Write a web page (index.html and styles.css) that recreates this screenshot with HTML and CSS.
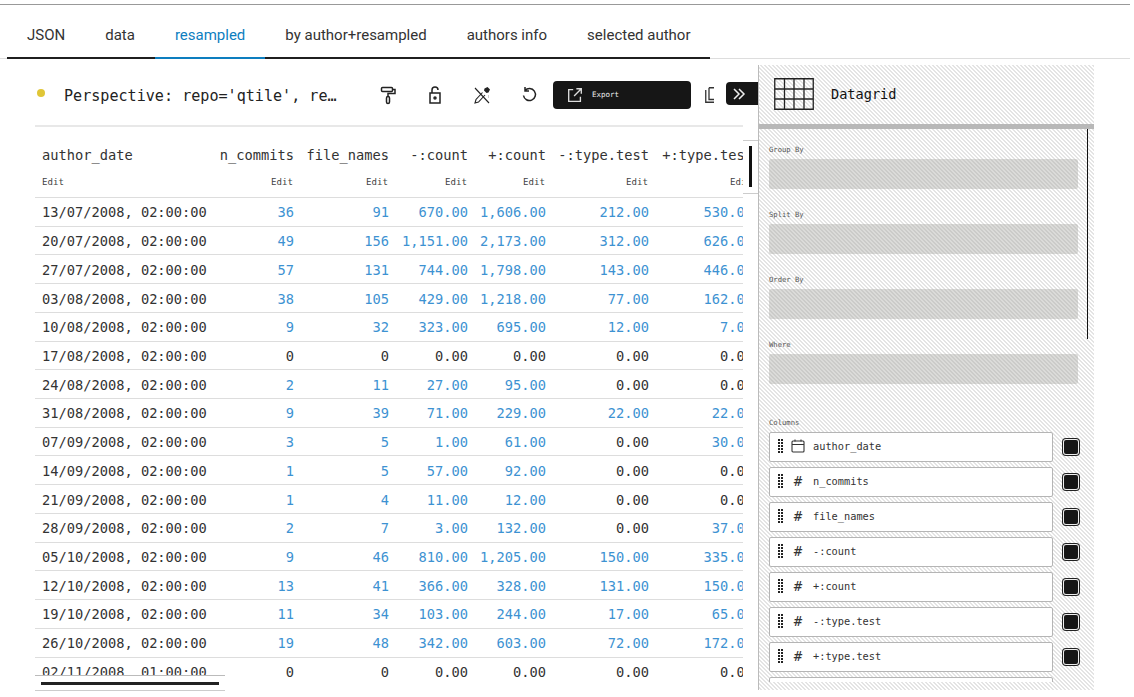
FILE: index.html
```html
<!DOCTYPE html>
<html lang="en">
<head>
    <meta charset="UTF-8">
    <meta name="viewport" content="width=device-width, initial-scale=1.0">
    <title>Perspective</title>
    <link rel="stylesheet" href="styles.css">
</head>
<body>

    <nav class="tabs">
        <a class="tab">JSON</a>
        <a class="tab">data</a>
        <a class="tab active">resampled</a>
        <a class="tab">by author+resampled</a>
        <a class="tab">authors info</a>
        <a class="tab">selected author</a>
    </nav>

    <div class="main">
        <section class="viewer">
            <div class="title-row">
                <span class="dot"></span>
                <span class="title">Perspective: repo='qtile', re…</span>
                <div class="tools">
                    <!-- paint roller -->
                    <svg class="tool" viewBox="0 0 20 20"><path d="M3.5 3.5a1 1 0 0 1 1-1h9a1 1 0 0 1 1 1v2a1 1 0 0 1-1 1h-9a1 1 0 0 1-1-1zM14.500 4.500h2.500v4h-7v3"/><rect x="8.500" y="11.500" width="3" height="7" rx="1.500"/></svg>
                    <!-- open lock -->
                    <svg class="tool" viewBox="0 0 20 20"><rect x="5" y="8" width="10" height="10"/><path d="M7 8V5a3 3 0 0 1 6 0"/><circle cx="10" cy="13" r="1"/></svg>
                    <!-- unpinned -->
                    <svg class="tool thin" viewBox="0 0 20 20"><path d="M3 3l14 15M10.500 7.500l-6.500 7-1 3.500 3.500-1 6.500-7"/><path class="fill" d="M12.500 3.500l3-1.500 2.500 2.500-1.500 3-2 .5-2.500-2.500z"/></svg>
                    <span class="tick"></span>
                    <!-- reset -->
                    <svg class="tool" viewBox="0 0 20 20"><path d="M6 5.500a6 6 0 1 1-1.500 5M6 2v4h4"/></svg>
                </div>
                <button class="export">
                    <svg viewBox="0 0 20 20"><path d="M8 4H3v13h13v-5M9 11l8-8M11.500 3H17v5.500"/></svg>
                    <span>Export</span>
                </button>
                <svg class="copy" viewBox="0 0 9 16"><path d="M4 .75H9M4 .75V12.500H9M.75 3V15.250H9"/></svg>
            </div>

            <div class="table-wrap">
                <table class="grid">
                    <thead>
                        <tr><th>author_date</th><th>n_commits</th><th>file_names</th><th>-:count</th><th>+:count</th><th>-:type.test</th><th>+:type.test</th></tr>
                        <tr class="edit-row"><td>Edit</td><td>Edit</td><td>Edit</td><td>Edit</td><td>Edit</td><td>Edit</td><td>Edit</td></tr>
                    </thead>
                    <tbody>
                        <tr><td>13/07/2008, 02:00:00</td><td>36</td><td>91</td><td>670.00</td><td>1,606.00</td><td>212.00</td><td>530.00</td></tr>
                        <tr><td>20/07/2008, 02:00:00</td><td>49</td><td>156</td><td>1,151.00</td><td>2,173.00</td><td>312.00</td><td>626.00</td></tr>
                        <tr><td>27/07/2008, 02:00:00</td><td>57</td><td>131</td><td>744.00</td><td>1,798.00</td><td>143.00</td><td>446.00</td></tr>
                        <tr><td>03/08/2008, 02:00:00</td><td>38</td><td>105</td><td>429.00</td><td>1,218.00</td><td>77.00</td><td>162.00</td></tr>
                        <tr><td>10/08/2008, 02:00:00</td><td>9</td><td>32</td><td>323.00</td><td>695.00</td><td>12.00</td><td>7.00</td></tr>
                        <tr class="zero"><td>17/08/2008, 02:00:00</td><td>0</td><td>0</td><td>0.00</td><td>0.00</td><td>0.00</td><td>0.00</td></tr>
                        <tr><td>24/08/2008, 02:00:00</td><td>2</td><td>11</td><td>27.00</td><td>95.00</td><td class="nil">0.00</td><td class="nil">0.00</td></tr>
                        <tr><td>31/08/2008, 02:00:00</td><td>9</td><td>39</td><td>71.00</td><td>229.00</td><td>22.00</td><td>22.00</td></tr>
                        <tr><td>07/09/2008, 02:00:00</td><td>3</td><td>5</td><td>1.00</td><td>61.00</td><td class="nil">0.00</td><td>30.00</td></tr>
                        <tr><td>14/09/2008, 02:00:00</td><td>1</td><td>5</td><td>57.00</td><td>92.00</td><td class="nil">0.00</td><td class="nil">0.00</td></tr>
                        <tr><td>21/09/2008, 02:00:00</td><td>1</td><td>4</td><td>11.00</td><td>12.00</td><td class="nil">0.00</td><td class="nil">0.00</td></tr>
                        <tr><td>28/09/2008, 02:00:00</td><td>2</td><td>7</td><td>3.00</td><td>132.00</td><td class="nil">0.00</td><td>37.00</td></tr>
                        <tr><td>05/10/2008, 02:00:00</td><td>9</td><td>46</td><td>810.00</td><td>1,205.00</td><td>150.00</td><td>335.00</td></tr>
                        <tr><td>12/10/2008, 02:00:00</td><td>13</td><td>41</td><td>366.00</td><td>328.00</td><td>131.00</td><td>150.00</td></tr>
                        <tr><td>19/10/2008, 02:00:00</td><td>11</td><td>34</td><td>103.00</td><td>244.00</td><td>17.00</td><td>65.00</td></tr>
                        <tr><td>26/10/2008, 02:00:00</td><td>19</td><td>48</td><td>342.00</td><td>603.00</td><td>72.00</td><td>172.00</td></tr>
                        <tr class="zero"><td>02/11/2008, 01:00:00</td><td>0</td><td>0</td><td>0.00</td><td>0.00</td><td>0.00</td><td>0.00</td></tr>
                    </tbody>
                </table>
            </div>

            <div class="hscroll"><span></span></div>
            <div class="vscroll"><span></span></div>
            <button class="collapse">
                <svg viewBox="0 0 14 14"><path d="M2 2l5 5-5 5M7 2l5 5-5 5"/></svg>
            </button>
        </section>

        <aside class="settings">
            <header class="plugin">
                <svg class="plugin-icon" viewBox="0 0 40 32"><path d="M.75.75h38.500v30.500H.75zM10.500.75v30.500M20 .75v30.500M30 .75v30.500M.75 11h38.500M.75 21h38.500"/></svg>
                <span>Datagrid</span>
            </header>
            <div class="settings-body">
                <div class="well-label">Group By</div>
                <div class="well"></div>
                <div class="well-label">Split By</div>
                <div class="well"></div>
                <div class="well-label">Order By</div>
                <div class="well"></div>
                <div class="well-label">Where</div>
                <div class="well"></div>

                <div class="well-label columns-label">Columns</div>
                <div class="columns">
                    <div class="col-row">
                        <div class="col-pill">
                            <span class="grip"></span>
                            <svg class="cal" viewBox="0 0 14 14"><rect x="1" y="2" width="12" height="11" rx="1"/><path d="M1 5.500h12M4 .5v2M10 .5v2"/></svg>
                            <span>author_date</span>
                        </div>
                        <span class="toggle"></span>
                    </div>
                    <div class="col-row">
                        <div class="col-pill"><span class="grip"></span><span class="hash">#</span><span>n_commits</span></div>
                        <span class="toggle"></span>
                    </div>
                    <div class="col-row">
                        <div class="col-pill"><span class="grip"></span><span class="hash">#</span><span>file_names</span></div>
                        <span class="toggle"></span>
                    </div>
                    <div class="col-row">
                        <div class="col-pill"><span class="grip"></span><span class="hash">#</span><span>-:count</span></div>
                        <span class="toggle"></span>
                    </div>
                    <div class="col-row">
                        <div class="col-pill"><span class="grip"></span><span class="hash">#</span><span>+:count</span></div>
                        <span class="toggle"></span>
                    </div>
                    <div class="col-row">
                        <div class="col-pill"><span class="grip"></span><span class="hash">#</span><span>-:type.test</span></div>
                        <span class="toggle"></span>
                    </div>
                    <div class="col-row">
                        <div class="col-pill"><span class="grip"></span><span class="hash">#</span><span>+:type.test</span></div>
                        <span class="toggle"></span>
                    </div>
                    <div class="col-row">
                        <div class="col-pill"></div>
                    </div>
                </div>
            </div>
        </aside>
    </div>

</body>
</html>
```

FILE: styles.css
```css
* {
    box-sizing: border-box;
}
html, body {
    height: 100%;
    overflow: hidden;
}
body {
    margin: 0;
    background: #fff;
    color: #222;
    font-family: "DejaVu Sans Mono", monospace;
}

/* tabs */
.tabs {
    display: flex;
    margin-top: 4px;
    width: 1130px;
    height: 55px;
    padding-left: 7px;
    border-top: 1px solid #999;
    box-shadow: inset 0 -1px 0 #ddd;
    font-family: Roboto, sans-serif;
    font-size: 15px;
}
.tab {
    padding: 21px 20px 0;
    height: 54px;
    border-bottom: 2px solid #1f1f1f;
    color: #333;
}
.tab:last-child {
    padding-right: 19px;
}
.tab.active {
    color: #0d7ebf;
    border-bottom-color: #0d7ebf;
}

.main {
    display: flex;
    height: 632px;
    margin-top: 6px;
}

/* left side */
.viewer {
    position: relative;
    width: 758px;
    flex: none;
    padding-left: 35px;
}
.title-row {
    display: flex;
    align-items: center;
    width: 708px;
    height: 62px;
    padding-bottom: 1px;
    padding-left: 2px;
    border-bottom: 2px solid #e8e8e8;
    overflow: hidden;
}
.dot {
    width: 8px;
    height: 8px;
    border-radius: 50%;
    background: #e0c637;
    margin-bottom: 3px;
}
.title {
    margin: 2px 0 0 19px;
    font-size: 15.100px;
    width: 314px;
    white-space: nowrap;
}
.tools {
    position: relative;
    display: flex;
    gap: 27px;
}
.tool {
    width: 20px;
    height: 20px;
    fill: none;
    stroke: #222;
    stroke-width: 1.500;
}
.tool.thin {
    stroke-width: 1.100;
}
.tool .fill {
    fill: #222;
    stroke: none;
}
.tick {
    position: absolute;
    left: 110px;
    top: 10px;
    width: 1px;
    height: 3px;
    background: #ccc;
}
.export {
    display: flex;
    align-items: center;
    gap: 8px;
    width: 138px;
    height: 28px;
    margin-left: 14px;
    padding: 0 0 0 13px;
    border: none;
    border-radius: 4px;
    background: #161616;
    color: #eee;
    font-family: "DejaVu Sans Mono", monospace;
    font-size: 7.500px;
}
.export svg {
    width: 18px;
    height: 18px;
    fill: none;
    stroke: #ddd;
    stroke-width: 1.500;
}
.copy {
    flex: none;
    width: 9px;
    height: 16px;
    margin: 0 0 0 14px;
    fill: none;
    stroke: #333;
    stroke-width: 1.300;
}

.table-wrap {
    width: 708px;
    height: 550px;
    overflow: hidden;
}
.grid {
    table-layout: fixed;
    width: 718px;
    border-collapse: collapse;
    font-size: 13.700px;
}
.grid th {
    height: 43px;
    padding: 13px 0 0;
    font-weight: normal;
    text-align: right;
    color: #333;
}
.grid td {
    height: 28.730px;
    padding: 1px 0 0;
    text-align: right;
    border-bottom: 1px solid #ddd;
    color: #3d92d2;
    white-space: nowrap;
}
.grid th:nth-child(1), .grid td:nth-child(1) {
    width: 173px;
    padding-left: 7px;
    text-align: left;
    color: #333;
}
.grid th:nth-child(2), .grid td:nth-child(2) { width: 86px; }
.grid th:nth-child(3), .grid td:nth-child(3) { width: 95px; }
.grid th:nth-child(4), .grid td:nth-child(4) { width: 79px; }
.grid th:nth-child(5), .grid td:nth-child(5) { width: 78px; }
.grid th:nth-child(6), .grid td:nth-child(6) { width: 103px; }
.grid th:nth-child(7), .grid td:nth-child(7) { width: 104px; }
.grid .edit-row td {
    height: 27.500px;
    font-size: 9.100px;
    color: #444;
    padding: 0 1px 4px 0;
}
.grid .edit-row td:first-child {
    padding-left: 7px;
}
.grid .zero td, .grid .nil {
    color: #333;
}

/* overlays */
.hscroll {
    position: absolute;
    left: 35px;
    top: 610px;
    width: 190px;
    height: 16px;
    padding: 6px 6px;
    border-top: 1px solid #bbb;
    border-bottom: 1px solid #ccc;
    background: #fff;
}
.hscroll span {
    display: block;
    height: 3px;
    background: #222;
}
.vscroll {
    position: absolute;
    left: 743px;
    top: 75px;
    width: 15px;
    height: 54px;
    padding: 5px 0 0 6px;
    border-top: 1px solid #ccc;
    border-bottom: 1px solid #ccc;
}
.vscroll span {
    display: block;
    width: 3px;
    height: 41px;
    background: #111;
}
.collapse {
    position: absolute;
    left: 726px;
    top: 17px;
    width: 32px;
    height: 23px;
    padding: 0 0 0 6px;
    border: none;
    border-radius: 4px 0 0 4px;
    background: #161616;
    display: flex;
    align-items: center;
}
.collapse svg {
    width: 14px;
    height: 14px;
    fill: none;
    stroke: #eee;
    stroke-width: 1.500;
}

/* right side */
.settings {
    width: 336px;
    height: 625px;
    flex: none;
    border-left: 1px solid #bbb;
    background: linear-gradient(45deg, #e4e4e4 25%, #fff 25%, #fff 50%, #e4e4e4 50%, #e4e4e4 75%, #fff 75%) 0 0 / 4px 4px;
    overflow: hidden;
}
.plugin {
    display: flex;
    align-items: center;
    gap: 17px;
    height: 64px;
    padding: 0 0 1px 15px;
    border-bottom: 5px solid #b8b8b8;
    font-size: 13.600px;
    color: #111;
}
.plugin-icon {
    width: 40px;
    height: 32px;
    fill: none;
    stroke: #222;
    stroke-width: 1.300;
}
.settings-body {
    height: 561px;
    padding: 14px 0 0 10px;
    overflow: hidden;
    background: linear-gradient(#111, #111) no-repeat 328px 0 / 1px 210px;
}
.well-label {
    height: 13px;
    font-size: 7.200px;
    line-height: 13px;
    color: #555;
}
.well {
    width: 309px;
    height: 30px;
    margin: 3px 0 19px;
    border-radius: 2px;
    background: rgba(170, 170, 165, 0.42);
}
.columns-label {
    margin-top: 32px;
    height: 12px;
}
.columns {
    display: flex;
    flex-direction: column;
    gap: 5px;
    height: 250px;
    margin-top: 4px;
    overflow: hidden;
}
.col-row {
    display: flex;
    align-items: center;
    gap: 9px;
}
.col-pill {
    display: flex;
    align-items: center;
    width: 284px;
    height: 30px;
    flex: none;
    padding: 0 0 3px 8px;
    border: 1px solid #b5b5b5;
    border-radius: 2px;
    background: #fff;
    font-size: 10.300px;
    color: #333;
}
.grip {
    width: 5px;
    height: 14px;
    margin-right: 8px;
    background: conic-gradient(from 270deg at 2px 2px, #222 25%, transparent 0) 0 0 / 3px 3px;
}
.hash {
    width: 14px;
    margin-right: 8px;
    text-align: center;
    font-size: 14px;
}
.cal {
    width: 14px;
    height: 14px;
    margin-right: 8px;
    fill: none;
    stroke: #333;
    stroke-width: 1.100;
}
.toggle {
    width: 14px;
    height: 14px;
    margin-left: 2px;
    border-radius: 2px;
    background: #161616;
    box-shadow: 0 0 0 1px #eee, 0 0 0 2px #222;
}
```
